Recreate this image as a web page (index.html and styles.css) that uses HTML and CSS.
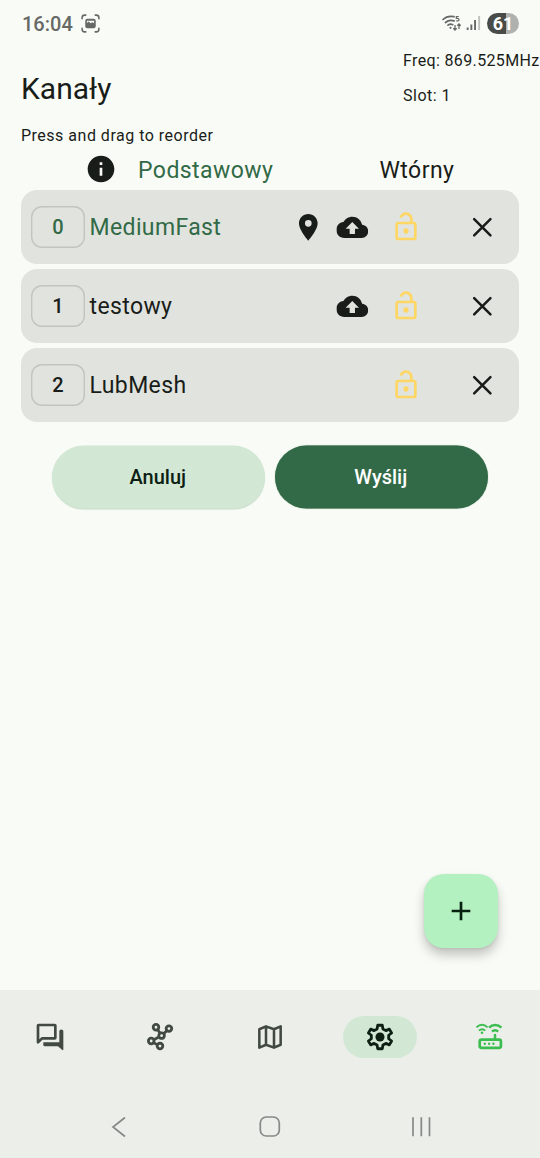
FILE: index.html
```html
<!DOCTYPE html>
<html lang="pl">
<head>
<meta charset="utf-8">
<title>Kanały</title>
<link rel="stylesheet" href="styles.css">
</head>
<body>
<svg class="defs" aria-hidden="true">
  <symbol id="cloud" viewBox="0 0 24 24"><path d="M19.35 10.04C18.67 6.59 15.64 4 12 4 9.11 4 6.6 5.64 5.35 8.04 2.34 8.36 0 10.91 0 14c0 3.31 2.69 6 6 6h13c2.76 0 5-2.24 5-5 0-2.64-2.05-4.78-4.65-4.96zM14 13v4h-4v-4H7l5-5 5 5h-3z"/></symbol>
  <symbol id="lock" viewBox="0 0 24 24"><path d="M12 17c1.1 0 2-.9 2-2s-.9-2-2-2-2 .9-2 2 .9 2 2 2zm6-9h-1V6c0-2.76-2.24-5-5-5-2.28 0-4.27 1.54-4.84 3.75l1.94.49C9.44 3.93 10.63 3 12 3c1.65 0 3 1.35 3 3v2H6c-1.1 0-2 .9-2 2v10c0 1.1.9 2 2 2h12c1.1 0 2-.9 2-2V10c0-1.1-.9-2-2-2zm0 12H6V10h12v10z"/></symbol>
  <symbol id="close" viewBox="0 0 24 24"><path d="M5.900 5.900 18.100 18.100M18.100 5.900 5.900 18.100" fill="none" stroke="currentColor" stroke-width="1.900" stroke-linecap="round"/></symbol>
</svg>
<div class="screen">
  <header class="status">
    <span class="clock">16:04</span>
    <svg class="shot" viewBox="0 0 20 20"><path d="M2 5.500V4.500A2.500 2.500 0 0 1 4.500 2H5.500M14.500 2h1A2.500 2.500 0 0 1 18 4.500v1M18 14.500v1a2.500 2.500 0 0 1-2.500 2.500h-1M5.500 18H4.500A2.500 2.500 0 0 1 2 15.500v-1" fill="none" stroke="currentColor" stroke-width="1.500" stroke-linecap="round"/><path fill-rule="evenodd" d="M7 5.500h6a2 2 0 0 1 2 2v5a2 2 0 0 1-2 2H7a2 2 0 0 1-2-2v-5a2 2 0 0 1 2-2zM6.600 9.500l1.700-1.300 1.800 1.500 1.700-1 1.600 1V7.300H6.600z"/></svg>
    <svg class="wifi" viewBox="0 0 20 18"><g fill="none" stroke="currentColor" stroke-width="1.700" stroke-linecap="round"><path d="M1 5.500C4 2.600 8 1.800 12 2.700M3.500 8.500c2.400-2.200 5.600-2.700 8.600-1.600M6 11.200c1.400-1.200 3.300-1.300 4.700-.5"/></g><circle cx="8.500" cy="13.800" r="1.100"/><path d="M13 11v5M11.300 14.200 13 16l1.700-1.800M17 15v-5M15.300 11.800 17 10l1.700 1.800" fill="none" stroke="currentColor" stroke-width="1.300"/><path d="M16.800 2.500h-2.500v2c2-.5 2.700 0 2.700 1.200s-1.300 1.500-2.800 1" fill="none" stroke="currentColor" stroke-width="1.200"/></svg>
    <svg class="signal" viewBox="0 0 15 16"><path d="M.7 12.500h1.900V15H.7zM4.400 9.500h1.900V15H4.400zM8.100 5H10v10H8.100z"/><path d="M12.200 1h1.900v14h-1.900z" opacity=".4"/></svg>
    <span class="battery">61</span>
  </header>
  <main class="content">
    <div class="heading">
      <h1>Kanały</h1>
      <div class="radio"><span class="freq">Freq: 869.525MHz</span><span>Slot: 1</span></div>
    </div>
    <p class="hint">Press and drag to reorder</p>
    <div class="legend">
      <svg class="icon" viewBox="0 0 24 24"><path d="M12 2C6.480 2 2 6.480 2 12s4.480 10 10 10 10-4.480 10-10S17.520 2 12 2zm1 15h-2v-6h2v6zm0-8h-2V7h2v2z"/></svg>
      <span class="primary">Podstawowy</span>
      <span class="secondary">Wtórny</span>
    </div>
    <ul class="channels">
      <li class="channel primary">
        <span class="index">0</span><span class="name">MediumFast</span>
        <svg class="icon pin" viewBox="0 0 24 24"><path d="M12 2C8.130 2 5 5.130 5 9c0 5.250 7 13 7 13s7-7.750 7-13c0-3.870-3.130-7-7-7zm0 9.500a2.500 2.500 0 0 1 0-5 2.500 2.500 0 0 1 0 5z"/></svg>
        <svg class="icon cloud"><use href="#cloud"/></svg>
        <svg class="icon lock"><use href="#lock"/></svg>
        <svg class="icon close"><use href="#close"/></svg>
      </li>
      <li class="channel">
        <span class="index">1</span><span class="name">testowy</span>
        <svg class="icon cloud"><use href="#cloud"/></svg>
        <svg class="icon lock"><use href="#lock"/></svg>
        <svg class="icon close"><use href="#close"/></svg>
      </li>
      <li class="channel">
        <span class="index">2</span><span class="name">LubMesh</span>
        <svg class="icon lock"><use href="#lock"/></svg>
        <svg class="icon close"><use href="#close"/></svg>
      </li>
    </ul>
    <div class="actions">
      <button class="cancel">Anuluj</button>
      <button class="send">Wyślij</button>
    </div>
    <button class="fab" aria-label="Dodaj"><svg class="icon" viewBox="0 0 24 24"><path d="M19 13h-6v6h-2v-6H5v-2h6V5h2v6h6v2z"/></svg></button>
  </main>
  <footer class="bottom">
    <nav class="tabs">
      <span class="tab"><svg class="icon" viewBox="0 0 24 24"><g fill="none" stroke="currentColor" stroke-width="2" stroke-linejoin="round"><path d="M3.400 3h12.200q.4 0 .4.400v9.200q0 .4-.4.400H6l-3 3V3.400q0-.4.400-.4z"/></g><path d="M19 7.500q0-1.200 1.500-1.200T22 7.500V21q0 1.500-1 .6L18 19H8q-1 0-1-1v-2h12z"/></svg></span>
      <span class="tab"><svg class="icon" viewBox="-.7 -.3 24 24"><g fill="none" stroke="currentColor" stroke-width="2.100"><circle cx="8.300" cy="4.400" r="2.100"/><circle cx="18" cy="5.400" r="2.100"/><circle cx="12.500" cy="10.700" r="2.100"/><circle cx="4.700" cy="14.700" r="2.100"/><circle cx="11.300" cy="18.500" r="2.100"/><path d="m9.500 6.200 1.900 2.700M16.500 6.900 14.100 9.200M10.500 11.700 6.600 13.700M6.500 15.900l2.900 1.700"/></g></svg></span>
      <span class="tab"><svg class="icon" viewBox="0 0 24 24"><path d="M4 6.200 9 4l6 2.200L20 4v13.800L15 20l-6-2.200L4 20zM9 4v13.800M15 6.200V20" fill="none" stroke="currentColor" stroke-width="1.900" stroke-linejoin="round"/></svg></span>
      <span class="tab selected"><svg class="icon" viewBox="-12 -12 24 24"><path class="gear" d="M-1.700-8.800H1.700L2.200-6 4.400-4.800 7-5.900 8.700-3 6.500-1.300V1.300L8.700 3 7 5.900 4.400 4.800 2.200 6 1.700 8.800H-1.700L-2.200 6-4.400 4.800-7 5.900-8.700 3-6.500 1.300V-1.300L-8.700-3-7-5.900-4.400-4.800-2.200-6z"/><circle r="3.400"/></svg></span>
      <span class="tab device"><svg class="icon" viewBox="0 0 32 32"><g fill="none" stroke="currentColor"><rect x="5.700" y="18.700" width="21.200" height="8.200" rx="1.800" stroke-width="2.700"/><path d="M21 18v-4" stroke-width="2.500" stroke-linecap="round"/><path d="M2.400 6.400c3.600-3.400 7.600-3.400 11.200 0M4.900 9.600c2.300-2 4.300-2 6.300 0" stroke-width="1.900"/><path d="M15 6.700c3.600-3.500 8.800-3.500 12.400 0M18 10.500c2-1.600 4.200-1.600 6.200 0" stroke-width="2.500"/></g><circle cx="8" cy="11.800" r="1.300"/><circle cx="10.800" cy="22.800" r="1.200"/><circle cx="15.100" cy="22.800" r="1.200"/><circle cx="19.400" cy="22.800" r="1.200"/></svg></span>
    </nav>
    <div class="system">
      <svg viewBox="0 0 24 24"><path d="M18 2.500 6 12l12 9.500"/></svg>
      <svg viewBox="0 0 24 24"><rect x="2.300" y="2" width="19" height="19" rx="6"/></svg>
      <svg viewBox="0 0 24 24"><path d="M4 2.300v19M12.300 2.300v19M20.500 2.300v19"/></svg>
    </div>
  </footer>
</div>
</body>
</html>
```
FILE: styles.css
```css
* { box-sizing: border-box; }
body { margin: 0; background: #f9fbf6; color: #191d19; font-family: Roboto, "Noto Sans", sans-serif; }
h1, p, ul { margin: 0; padding: 0; }
button { border: 0; padding: 0; font: inherit; }
svg { display: block; fill: currentColor; flex: none; }
.defs { display: none; }
.screen { width: 540px; height: 1158px; display: flex; flex-direction: column; overflow: hidden; }

.status { height: 46px; padding: 0 21px; display: flex; align-items: center; color: #666965; }
.clock { font-size: 20px; font-weight: 500; letter-spacing: 0; width: 58.500px; line-height: 46px; padding: 1px 0 0 1px; }
.shot { width: 21px; height: 21px; }
.wifi { width: 20px; height: 18px; margin-left: auto; }
.signal { width: 15px; height: 16px; margin: 0 6px 0 4px; }
.battery { width: 32px; height: 21px; border-radius: 11px; background: linear-gradient(90deg, #484b48 60%, #aeb1ad 60%); color: #fff; font-size: 18px; font-weight: 700; line-height: 22px; text-align: center; }

.content { flex: 1; padding: 0 21px; display: flex; flex-direction: column; }
.heading { height: 78px; display: flex; justify-content: space-between; }
h1 { font-size: 30px; font-weight: 400; line-height: 40px; padding-top: 22.500px; }
.radio { width: 116px; display: flex; flex-direction: column; font-size: 16px; letter-spacing: .5px; line-height: 35px; white-space: nowrap; margin-top: -3px; }
.freq { letter-spacing: .36px; }
.hint { font-size: 16px; letter-spacing: .5px; line-height: 24px; }
.legend { height: 42px; display: flex; align-items: center; font-size: 23px; letter-spacing: .45px; padding: 0 0 1px 64px; }
.legend span { padding-top: 3px; }
.legend .primary { margin-left: 21px; width: 241.500px; }
.icon { width: 32px; height: 32px; }
.primary { color: #326a47; }
.channels { list-style: none; display: flex; flex-direction: column; gap: 5px; }
.channel { height: 74px; border-radius: 16px; background: #e1e3de; display: flex; align-items: center; padding: 0 21px 0 10px; }
.index { width: 54px; height: 42px; border-radius: 11px; box-shadow: inset 0 0 0 1.400px #c1c5bf; font-size: 20px; font-weight: 500; line-height: 43px; text-align: center; }
.name { margin-left: 4.500px; flex: 1; font-size: 23px; letter-spacing: .38px; }
.channel .icon { color: #191d19; transform: translate(.3px, .3px); }
.channel .pin { margin-right: 12.500px; }
.channel .cloud { margin-right: 22px; }
.channel .lock { color: #fdd663; margin-right: 44px; transform: none; }
.actions { margin-top: 23.500px; display: flex; gap: 10px; justify-content: center; }
.actions button { width: 213px; height: 63px; border-radius: 32px; font-size: 20px; font-weight: 500; padding: 0 1.500px 1px 0; transform: translateY(-.4px); }
.actions .cancel { background: #d2e8d5; color: #0d1f13; box-shadow: 0 1px 1px #c7dbc9; }
.actions .send { background: #326a47; color: #fff; box-shadow: 0 0 1px #6a9478; }
.fab { margin: auto 21px 42px auto; width: 74px; height: 74px; border-radius: 20px; background: #b4f1c1; color: #06210f; display: grid; place-items: center; box-shadow: 0 7px 11px rgba(0,0,0,.22), 0 1px 3px rgba(0,0,0,.08); }

.bottom { height: 168px; background: #ebeee9; }
.tabs { height: 94px; display: flex; gap: 36.100px; padding: 0 13px; align-items: center; color: #414942; }
.tab { width: 74px; height: 42px; border-radius: 21px; display: grid; place-items: center; flex: none; }
.selected { background: #d2e8d5; color: #0d1f13; }
.gear { fill: none; stroke: currentColor; stroke-width: 2.100; stroke-linejoin: round; }
.device { color: #3bbd4f; }
.system { height: 74px; padding: 11px 107px 0; display: flex; justify-content: space-between; align-items: center; color: #868986; }
.system svg { width: 24px; height: 24px; fill: none; stroke: currentColor; stroke-width: 1.700; }
.system svg + svg { margin-left: -2px; }
```
